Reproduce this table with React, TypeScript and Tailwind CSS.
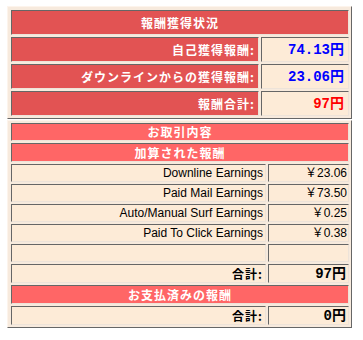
const jp = "font-['Noto_Sans_CJK_JP','Liberation_Sans',sans-serif]"
const en = "font-['Liberation_Sans','Noto_Sans_CJK_JP',sans-serif]"
const num = "font-['Liberation_Mono','Noto_Sans_CJK_JP',monospace]"

const cell =
  "border-t border-l border-t-[#666] border-l-[#666] border-b border-r border-b-[#ede3d9] border-r-[#ede3d9]"

const frame =
  "ml-[7px] w-[345px] border border-t-[#fdf4ec] border-l-[#fdf4ec] border-b-[#666] border-r-[#666] bg-[#f7eadd] pl-[3px] pr-[2px] pb-[2px] flex flex-col gap-[2px]"

function Head({ text, color, h }: { text: string; color: string; h: string }) {
  return (
    <div
      className={`${cell} ${color} ${h} ${jp} flex items-center justify-center text-[12px] font-bold text-white tracking-[1px] leading-none`}
    >
      {text}
    </div>
  )
}

function Summary({ label, value, tone }: { label: string; value: string; tone: string }) {
  return (
    <div className="flex gap-[2px] h-[25px]">
      <div
        className={`${cell} ${jp} w-[248px] bg-[#e25353] flex items-center justify-end pr-[3px] text-[12px] font-bold text-white tracking-[1px] leading-none`}
      >
        {label}
      </div>
      <div
        className={`${cell} ${num} flex-1 bg-[#fdebd7] flex items-center justify-end pr-[4px] text-[14px] font-bold leading-none ${tone}`}
      >
        {value}
      </div>
    </div>
  )
}

function Line({ label, value }: { label: string; value: string }) {
  return (
    <div className="flex gap-[2px] h-[18px]">
      <div
        className={`${cell} ${en} w-[255px] bg-[#fdebd7] flex items-center justify-end pr-[2px] text-[12px] text-black leading-none`}
      >
        {label}
      </div>
      <div
        className={`${cell} ${en} flex-1 bg-[#fdebd7] flex items-center justify-end pr-[1px] text-[12px] text-black leading-none`}
      >
        {value}
      </div>
    </div>
  )
}

function Total({ value }: { value: string }) {
  return (
    <div className="flex gap-[2px] h-[19px]">
      <div
        className={`${cell} ${jp} w-[255px] bg-[#fdebd7] flex items-center justify-end pr-[2px] text-[12px] font-bold text-black tracking-[1px] leading-none`}
      >
        合計:
      </div>
      <div
        className={`${cell} ${num} flex-1 bg-[#fdebd7] flex items-center justify-end pr-[2px] text-[14px] font-bold text-black leading-none`}
      >
        {value}
      </div>
    </div>
  )
}

export default function App() {
  return (
    <div className="w-[363px] h-[340px] bg-white pt-[6px]">
      <div className={`${frame} pt-[3px]`}>
        <Head text="報酬獲得状況" color="bg-[#e25353]" h="h-[25px]" />
        <Summary label="自己獲得報酬:" value="74.13円" tone="text-[#0000ff]" />
        <Summary label="ダウンラインからの獲得報酬:" value="23.06円" tone="text-[#0000ff]" />
        <Summary label="報酬合計:" value="97円" tone="text-[#ff0000]" />
      </div>

      <div className={`${frame} mt-[1px] pt-[2px]`}>
        <Head text="お取引内容" color="bg-[#ff6666]" h="h-[18px]" />
        <Head text="加算された報酬" color="bg-[#ff6666]" h="h-[19px]" />
        <Line label="Downline Earnings" value="￥23.06" />
        <Line label="Paid Mail Earnings" value="￥73.50" />
        <Line label="Auto/Manual Surf Earnings" value="￥0.25" />
        <Line label="Paid To Click Earnings" value="￥0.38" />
        <Line label="" value="" />
        <Total value="97円" />
        <Head text="お支払済みの報酬" color="bg-[#ff6666]" h="h-[19px]" />
        <Total value="0円" />
      </div>
    </div>
  )
}
